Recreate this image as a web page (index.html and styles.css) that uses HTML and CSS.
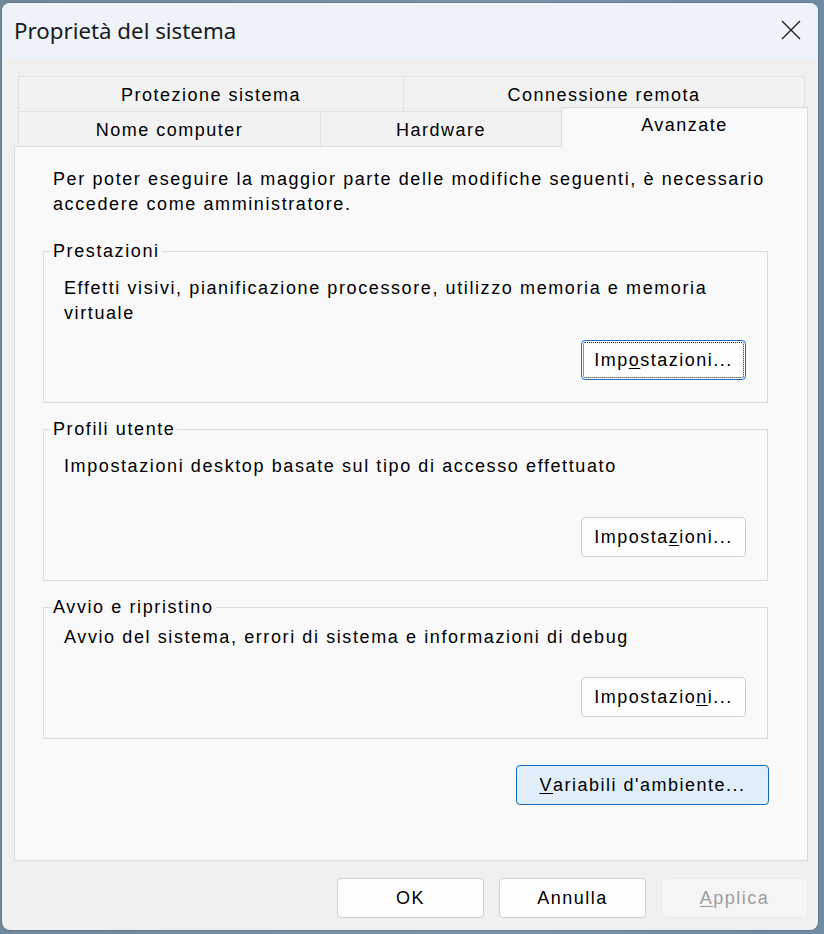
FILE: index.html
```html
<!DOCTYPE html>
<html lang="it">
<head>
<meta charset="utf-8">
<title>Proprietà del sistema</title>
<link rel="stylesheet" href="styles.css">
</head>
<body>
<div class="window">
  <div class="titlebar">
    <span class="title">Proprietà del sistema</span>
    <span class="close">
      <svg width="20" height="20" viewBox="0 0 20 20"><path d="M1 1 L19 19 M19 1 L1 19" stroke="#1b1b1b" stroke-width="1.3" fill="none"/></svg>
    </span>
  </div>
  <div class="content">
    <div class="tabs">
      <div class="tabrow back">
        <div class="tab t-prot">Protezione sistema</div>
        <div class="tab t-conn">Connessione remota</div>
      </div>
      <div class="tabrow front">
        <div class="tab t-nome">Nome computer</div>
        <div class="tab t-hw">Hardware</div>
        <div class="tab t-adv selected">Avanzate</div>
      </div>
    </div>
    <div class="panel">
      <p class="intro">Per poter eseguire la maggior parte delle modifiche seguenti, è necessario accedere come amministratore.</p>
      <fieldset class="group g1">
        <legend>Prestazioni</legend>
        <p class="gtext">Effetti visivi, pianificazione processore, utilizzo memoria e memoria virtuale</p>
        <div class="brow"><button class="btn focused">Imp<u>o</u>stazioni...</button></div>
      </fieldset>
      <fieldset class="group g2">
        <legend>Profili utente</legend>
        <p class="gtext">Impostazioni desktop basate sul tipo di accesso effettuato</p>
        <div class="brow"><button class="btn">Impost<span>a</span><u>z</u>ioni...</button></div>
      </fieldset>
      <fieldset class="group g3">
        <legend>Avvio e ripristino</legend>
        <p class="gtext">Avvio del sistema, errori di sistema e informazioni di debug</p>
        <div class="brow"><button class="btn">Impostazio<u>n</u>i...</button></div>
      </fieldset>
      <div class="envrow"><button class="btn env"><u>V</u>ariabili d'ambiente...</button></div>
    </div>
  </div>
  <div class="footer">
    <button class="btn fbtn">OK</button>
    <button class="btn fbtn">Annulla</button>
    <button class="btn fbtn disabled"><u>A</u>pplica</button>
  </div>
</div>
</body>
</html>
```
FILE: styles.css
```css
* { box-sizing: border-box; }
html, body { margin: 0; padding: 0; }
body {
  width: 824px;
  height: 934px;
  background: linear-gradient(90deg, #72889b 0%, #7d92a5 60%, #6f8aa3 100%);
  overflow: hidden;
  font-family: "Liberation Sans", Arial, sans-serif;
  color: #000;
}
.window {
  margin: 3px 0 0 2px;
  width: 816px;
  height: 927px;
  border-radius: 8px;
  background: #f0f0f0;
  overflow: hidden;
  display: flex;
  flex-direction: column;
  box-shadow: 0 0 0 1px rgba(60, 70, 80, 0.25);
}
.titlebar {
  height: 56px;
  background: #eef3fa;
  display: flex;
  align-items: center;
  justify-content: space-between;
  padding: 0 17px 0 12px;
  flex: none;
}
.title {
  font-family: "Noto Sans", "Open Sans", sans-serif;
  font-size: 22.3px;
  color: #1a1a1a;
  margin-top: -1px;
}
.close { display: flex; margin-top: -2px; }
.content {
  padding: 17px 10px 0 12px;
  flex: none;
}
.tabs {
  margin-left: 4px;
  font-size: 18px;
  letter-spacing: 1.5px;
}
.tabrow { display: flex; height: 35px; }
.tabrow.back { margin-right: 3px; }
.tab {
  display: flex;
  align-items: center;
  justify-content: center;
  background: #f2f2f2;
  border: 1px solid #e2e2e2;
  border-bottom: none;
  margin-left: -1px;
  padding-top: 2px;
}
.tabrow .tab:first-child { margin-left: 0; }
.t-prot { width: 386px; }
.t-conn { flex: 1; }
.t-nome { width: 303px; }
.t-hw { width: 242px; }
.t-adv { flex: 1; }
.tab.selected {
  background: #f9f9f9;
  border-color: #dcdcdc;
  margin-top: -4px;
  height: 40px;
  align-items: flex-start;
  padding-top: 7px;
  position: relative;
  z-index: 1;
}
.panel {
  height: 715px;
  background: #f9f9f9;
  border: 1px solid #dcdcdc;
  padding: 20px 39px 0 28px;
  font-size: 18px;
  line-height: 25px;
  letter-spacing: 1.6px;
}
.intro {
  margin: 0 0 22px 10px;
}
.group {
  margin: 0 0 14px 0;
  border: 1px solid #dcdcdc;
  padding: 12px 21px 0 20px;
  min-width: 0;
}
.group legend {
  padding: 0 2px;
  margin-left: -13px;
  line-height: 25px;
}
.gtext { margin: 0; }
.brow { display: flex; justify-content: flex-end; }
.g1 { height: 164px; }
.g1 .brow { margin-top: 14px; }
.g2 { height: 164px; }
.g2 .brow { margin-top: 38px; }
.g3 { height: 144px; padding-top: 5px; margin-bottom: 0; }
.g3 .brow { margin-top: 27px; }
.btn {
  font-family: "Liberation Sans", Arial, sans-serif;
  font-size: 18px;
  letter-spacing: 1.5px;
  color: #000;
  height: 40px;
  width: 165px;
  background: #fdfdfd;
  border: 1px solid #d0d0d0;
  border-radius: 4px;
  padding: 0;
  display: flex;
  align-items: center;
  justify-content: center;
}
.btn u { text-decoration-thickness: 1px; text-underline-offset: 2px; }
.focused {
  border-color: #1a6fc4;
  outline: 1px dotted #222;
  outline-offset: -3px;
}
.envrow { display: flex; justify-content: flex-end; margin-top: 26px; margin-right: -1px; }
.env {
  width: 253px;
  background: #e0eef9;
  border-color: #0f6cbd;
}
.footer {
  display: flex;
  justify-content: flex-end;
  gap: 15px;
  padding: 17px 10px 0 0;
}
.fbtn { width: 147px; }
.disabled {
  background: #f5f5f5;
  border-color: #ececec;
  color: #9d9d9d;
}
```
